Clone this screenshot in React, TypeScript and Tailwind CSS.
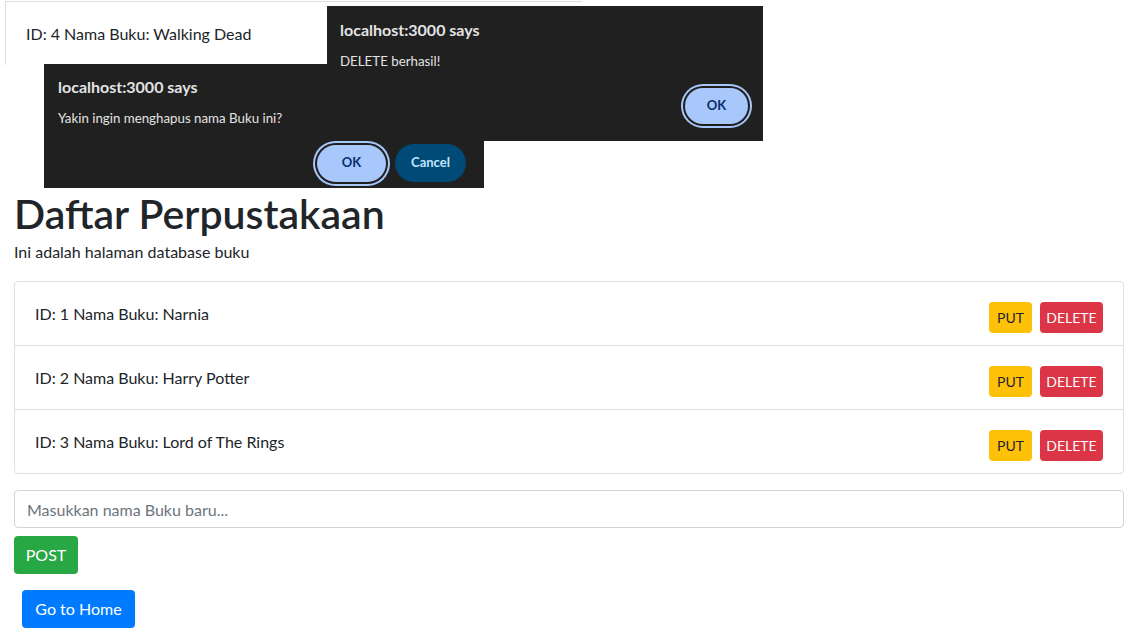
const font = "font-['Segoe_UI','Lato','Liberation_Sans',sans-serif]";

const books = [
  { id: 1, nama: "Narnia" },
  { id: 2, nama: "Harry Potter" },
  { id: 3, nama: "Lord of The Rings" },
];

const Dialog = ({
  className,
  message,
  okClass,
  withCancel,
}: {
  className: string;
  message: string;
  okClass: string;
  withCancel?: boolean;
}) => {
  return (
    <div className={`absolute flex flex-col bg-[#202020] text-[#e3e3e3] ${className}`}>
      <p className="text-base font-bold leading-5">localhost:3000 says</p>
      <p className="mt-[13px] text-[13.3px] leading-4">{message}</p>
      <div className="mt-auto flex items-center justify-end gap-[9px]">
        <button
          className={`rounded-full bg-[#a8c7fa] text-[13px] font-bold text-[#062e6f] ring-2 ring-[#a8c7fa] ring-offset-2 ring-offset-[#1f1f1f] ${okClass}`}
        >
          OK
        </button>
        {withCancel && (
          <button className="h-[38px] w-[71px] rounded-full bg-[#004a77] text-[13px] font-bold text-[#c2e7ff]">
            Cancel
          </button>
        )}
      </div>
    </div>
  );
};

const App = () => {
  return (
    <div className={`relative h-[628px] overflow-hidden bg-white text-[#212529] ${font}`}>
      <section className="relative h-[189px]">
        <div className="ml-[5px] mt-[1px] h-[64px] w-[577px] border-l border-t border-[#dfdfdf] pl-[20px] pt-[20px] text-base leading-6">
          ID: 4 Nama Buku: Walking Dead
        </div>
        <Dialog
          className="left-[44px] top-[63px] h-[124px] w-[440px] pb-[6px] pl-[14px] pr-[18px] pt-[13px]"
          message="Yakin ingin menghapus nama Buku ini?"
          okClass="h-[37px] w-[69px]"
          withCancel
        />
        <Dialog
          className="left-[327px] top-[5px] h-[135px] w-[436px] pb-[17px] pl-[13px] pr-[15px] pt-[14px]"
          message="DELETE berhasil!"
          okClass="h-[36px] w-[63px]"
        />
      </section>

      <main className="pl-[14px] pr-[15px]">
        <h1 className="text-[41px] font-semibold leading-[48px]">Daftar Perpustakaan</h1>
        <p className="mt-[2px] text-base leading-6">Ini adalah halaman database buku</p>

        <ul className="mt-[17px] rounded border border-[#dfdfdf]">
          {books.map((b, i) => (
            <li
              key={b.id}
              className={`flex items-start justify-between px-5 pb-3 pt-5 ${i > 0 ? "border-t border-[#dfdfdf]" : ""}`}
            >
              <span className="text-base leading-6">
                ID: {b.id} Nama Buku: {b.nama}
              </span>
              <div className="flex gap-2">
                <button className="h-[31px] w-[43px] rounded bg-[#ffc107] text-sm text-[#212529]">PUT</button>
                <button className="h-[31px] w-[63px] rounded bg-[#dc3545] text-sm text-white">DELETE</button>
              </div>
            </li>
          ))}
        </ul>

        <input
          placeholder="Masukkan nama Buku baru..."
          className="mt-4 block h-[38px] w-full rounded border border-[#ced4da] px-3 text-base placeholder:text-[#6c757d]"
        />
        <button className="mt-2 block h-[38px] w-[64px] rounded bg-[#28a745] text-base text-white">POST</button>
        <button className="ml-2 mt-4 block h-[38px] w-[113px] rounded bg-[#007bff] text-base text-white">
          Go to Home
        </button>
      </main>
    </div>
  );
};

export default App;
